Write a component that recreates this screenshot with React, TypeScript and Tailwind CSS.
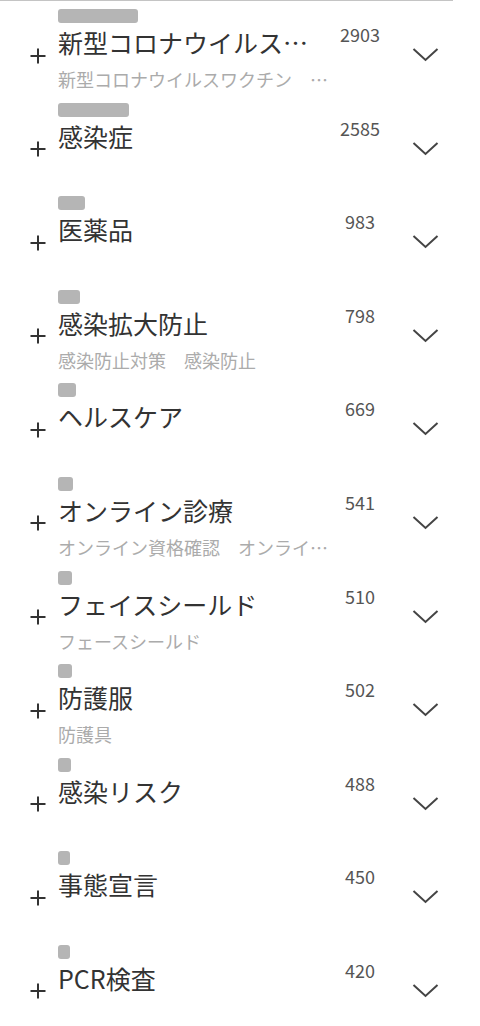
import React from "react";

type Row = { title: string; count: number; subs?: React.ReactNode };

const rows: Row[] = [
  {
    title: "新型コロナウイルス…",
    count: 2903,
    subs: (
      <>
        <span>新型コロナウイルスワクチン</span>
        <span className="ml-[18px]">…</span>
      </>
    ),
  },
  { title: "感染症", count: 2585 },
  { title: "医薬品", count: 983 },
  {
    title: "感染拡大防止",
    count: 798,
    subs: (
      <>
        <span>感染防止対策</span>
        <span className="ml-[18px]">感染防止</span>
      </>
    ),
  },
  { title: "ヘルスケア", count: 669 },
  {
    title: "オンライン診療",
    count: 541,
    subs: (
      <>
        <span>オンライン資格確認</span>
        <span className="ml-[18px]">オンライ…</span>
      </>
    ),
  },
  {
    title: "フェイスシールド",
    count: 510,
    subs: <span>フェースシールド</span>,
  },
  { title: "防護服", count: 502, subs: <span>防護具</span> },
  { title: "感染リスク", count: 488 },
  { title: "事態宣言", count: 450 },
  { title: "PCR検査", count: 420 },
];

const MAX = 2903;

function Plus() {
  return (
    <svg width="16" height="16" viewBox="0 0 16 16" className="block">
      <path d="M8 0.5V15.5M0.5 8H15.5" stroke="#333" strokeWidth="2" fill="none" />
    </svg>
  );
}

function Chevron() {
  return (
    <svg width="27" height="15" viewBox="0 0 27 15" className="block">
      <polyline
        points="1.5,2 13.5,13 25.5,2"
        stroke="#444"
        strokeWidth="2"
        fill="none"
        strokeLinejoin="miter"
      />
    </svg>
  );
}

export default function App() {
  return (
    <div
      className="w-[480px] bg-white"
      style={{ fontFamily: '"Noto Sans CJK JP", "Noto Sans", sans-serif' }}
    >
      <div className="w-[453px] border-t border-[#c4c4c4]">
        {rows.map((r) => (
          <div key={r.title} className="flex h-[93.6px]">
            <div className="w-[58px] shrink-0 pl-[29.5px] pt-[46.5px]">
              <Plus />
            </div>
            <div className="w-[272px] shrink-0 flex flex-col pt-[8px]">
              <div
                className="h-[14px] rounded-[3px] bg-[#b5b5b5]"
                style={{ width: `${(r.count / MAX) * 80}px` }}
              />
              <div className="mt-[7px] text-[25px] leading-[25px] text-[#333] whitespace-nowrap">
                {r.title}
              </div>
              {r.subs && (
                <div className="mt-[15px] text-[18px] leading-[18px] text-[#ababab] whitespace-nowrap flex">
                  {r.subs}
                </div>
              )}
            </div>
            <div className="w-[60px] shrink-0 pt-[24px] text-center text-[18px] leading-[18px] text-[#555]">
              {r.count}
            </div>
            <div className="pl-[22px] pt-[46px]">
              <Chevron />
            </div>
          </div>
        ))}
      </div>
    </div>
  );
}
